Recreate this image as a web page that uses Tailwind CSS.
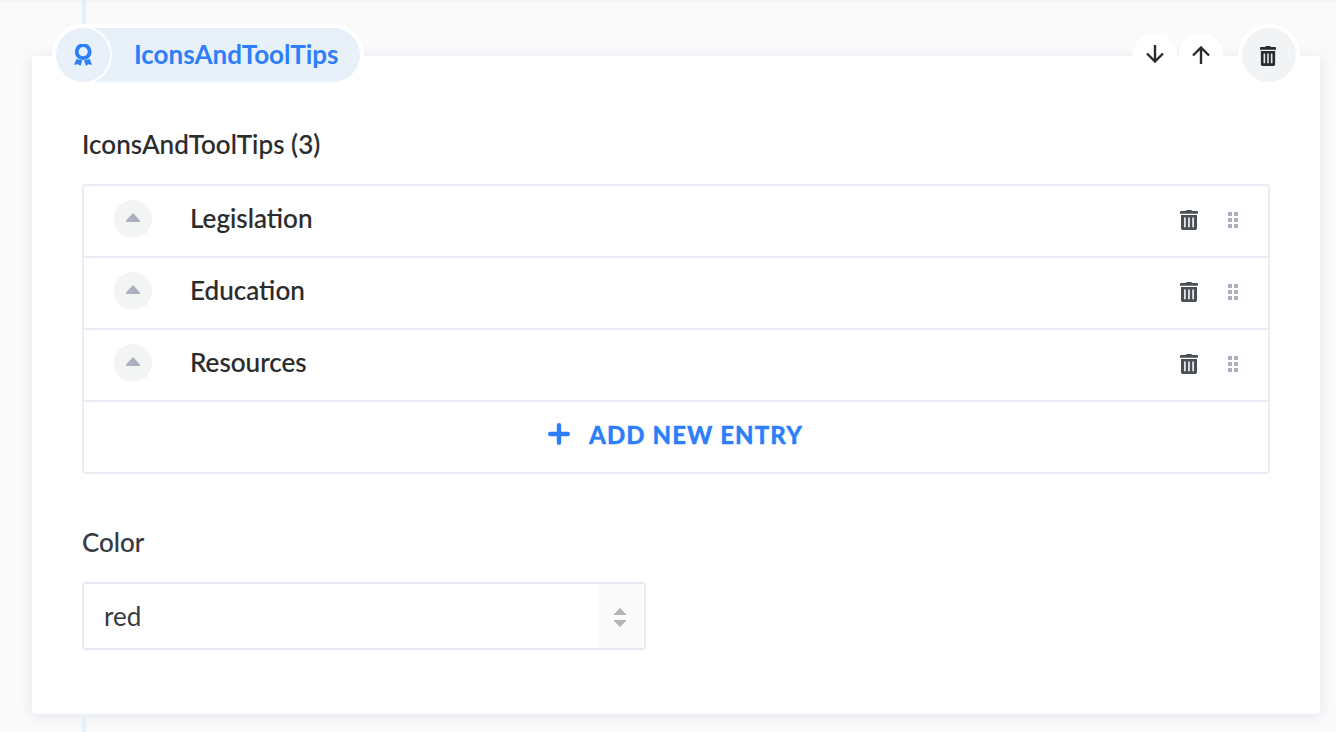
<!DOCTYPE html>
<html lang="en">
<head>
<meta charset="utf-8">
<title>IconsAndToolTips</title>
<script src="https://cdn.jsdelivr.net/npm/@tailwindcss/browser@4"></script>
</head>
<body class="h-[732px] overflow-hidden bg-[#fafafa] font-['Lato',sans-serif] text-[26px] leading-8 font-medium text-[#292b2c]">
<svg class="hidden">
  <symbol id="trash" viewBox="0 0 18 20" preserveAspectRatio="none">
    <path fill="currentColor" d="M6 1Q6 0 7 0h4Q12 0 12 1h5q1 0 1 1v1.700H0V2q0-1 1-1zM1 5h16v13.200q0 1.800-1.800 1.800H2.800Q1 20 1 18.200z"/>
    <path fill="#e4e6e8" d="M4 7.500v9.800h1.800V7.500zM8.100 7.500v9.800h1.800V7.500zM12.200 7.500v9.800H14V7.500z"/>
  </symbol>
  <symbol id="grip" viewBox="0 0 10 16">
    <path fill="currentColor" d="M0 0h4v4H0zM6 0h4v4H6zM0 6h4v4H0zM6 6h4v4H6zM0 12h4v4H0zM6 12h4v4H6z"/>
  </symbol>
</svg>
<div class="flex h-7 pl-[82px] shadow-[inset_0_2px_3px_-1px_#eef1f8]"><div class="w-1 bg-[#e6f0fa]"></div></div>
<main class="mt-7 mr-4 ml-8 h-[658px] rounded bg-white shadow-[0_2px_14px_rgba(104,128,190,0.16)]">
  <header class="relative -top-7 flex h-[54px] items-center pr-6 pl-6">
    <div class="flex h-[54px] w-[304px] items-center rounded-full bg-[#e8f0fa] ring-4 ring-white">
      <div class="flex size-[54px] shrink-0 items-center justify-center rounded-full bg-[#e8f0fa] ring-2 ring-white">
        <svg class="h-[22px] w-[18px]" viewBox="0 0 18 22" fill="none">
          <circle cx="9.200" cy="7.700" r="6.500" stroke="#2d7ff9" stroke-width="3.800"/>
          <path fill="#2d7ff9" d="M2.400 15 8.400 16.500 6.400 22 4.300 20.300 0 20.800zM15.800 15 9.900 16.500l2.200 5.500 2-1.700 3.900.5z"/>
        </svg>
      </div>
      <span class="mb-[2px] ml-6 font-bold text-[#2d7ff9]">IconsAndToolTips</span>
    </div>
    <div class="mr-[19px] ml-auto flex gap-[2px]">
      <div class="flex size-11 items-center justify-center rounded-full bg-white">
        <svg class="mb-[3px] size-[18px]" viewBox="0 0 18 18" fill="none" stroke="#292b2c" stroke-width="2.400"><path d="M9 0v17M1 8.500l8 8 8-8"/></svg>
      </div>
      <div class="flex size-11 items-center justify-center rounded-full bg-white">
        <svg class="size-[18px]" viewBox="0 0 18 18" fill="none" stroke="#292b2c" stroke-width="2.400"><path d="M9 18V1M1 9.500l8-8 8 8"/></svg>
      </div>
    </div>
    <div class="flex size-[54px] items-center justify-center rounded-full bg-[#f1f3f5] ring-4 ring-white">
      <svg class="mt-[2px] ml-[-2px] h-5 w-4 text-[#292b2c]"><use href="#trash"/></svg>
    </div>
  </header>
  <section class="mr-[50px] ml-[50px] pt-[18px]">
    <h2 class="tracking-[0.05px] [-webkit-text-stroke:0.15px]">IconsAndToolTips (3)</h2>
    <div class="mt-6 h-[290px] rounded border-2 border-[#e9edf4]">
      <div class="flex h-[72px] items-center border-b-2 border-[#e9edf4] pr-[30px] pl-[30px]">
        <div class="mb-1 flex size-[38px] items-center justify-center rounded-full bg-[#f3f5f5]"><svg class="mb-[3px] h-[9px] w-[14px]" viewBox="0 0 14 9"><path fill="#aab2c0" d="M7 0l7 7.500V9H0V7.500z"/></svg></div>
        <span class="mb-[6px] ml-[38px] text-[26.100px] [-webkit-text-stroke:0.15px]">Legislation</span>
        <svg class="mr-[30px] mb-[2px] ml-auto h-5 w-[18px] text-[#4a4f57]"><use href="#trash"/></svg>
        <svg class="mb-[2px] h-4 w-[10px] text-[#aab2c0]"><use href="#grip"/></svg>
      </div>
      <div class="flex h-[72px] items-center border-b-2 border-[#e9edf4] pr-[30px] pl-[30px]">
        <div class="mb-1 flex size-[38px] items-center justify-center rounded-full bg-[#f3f5f5]"><svg class="mb-[3px] h-[9px] w-[14px]" viewBox="0 0 14 9"><path fill="#aab2c0" d="M7 0l7 7.500V9H0V7.500z"/></svg></div>
        <span class="mb-[6px] ml-[38px] text-[26.100px] [-webkit-text-stroke:0.15px]">Education</span>
        <svg class="mr-[30px] mb-[2px] ml-auto h-5 w-[18px] text-[#4a4f57]"><use href="#trash"/></svg>
        <svg class="mb-[2px] h-4 w-[10px] text-[#aab2c0]"><use href="#grip"/></svg>
      </div>
      <div class="flex h-[72px] items-center border-b-2 border-[#e9edf4] pr-[30px] pl-[30px]">
        <div class="mb-1 flex size-[38px] items-center justify-center rounded-full bg-[#f3f5f5]"><svg class="mb-[3px] h-[9px] w-[14px]" viewBox="0 0 14 9"><path fill="#aab2c0" d="M7 0l7 7.500V9H0V7.500z"/></svg></div>
        <span class="mb-[6px] ml-[38px] text-[26.100px] [-webkit-text-stroke:0.15px]">Resources</span>
        <svg class="mr-[30px] mb-[2px] ml-auto h-5 w-[18px] text-[#4a4f57]"><use href="#trash"/></svg>
        <svg class="mb-[2px] h-4 w-[10px] text-[#aab2c0]"><use href="#grip"/></svg>
      </div>
      <div class="flex h-[66px] items-center pl-[464px] text-2xl font-black tracking-[1.1px] text-[#2d7ff9]">
        <svg class="mr-[19px] mb-[3px] size-[22px]" viewBox="0 0 22 22" fill="none" stroke="currentColor" stroke-width="4.400" stroke-linecap="round"><path d="M11 2.200v17.600M2.200 11h17.600"/></svg>
        <span class="[-webkit-text-stroke:0.3px]">ADD NEW ENTRY</span>
      </div>
    </div>
    <h2 class="mt-[52px] text-[#373b44] [-webkit-text-stroke:0.1px]">Color</h2>
    <div class="mt-[24px] flex h-[68px] w-[564px] items-center rounded border-2 border-[#e4e9f4] pr-[2px] pl-5 font-normal text-[#373b44]">
      <span>red</span>
      <div class="ml-auto flex h-16 w-11 items-center justify-center bg-[#fafafa]">
        <svg class="mt-[4px] h-5 w-3" viewBox="0 0 12 20"><path fill="#b3b5b9" d="M6 0l6 6v1H0V6zM0 12h12v1l-6 6-6-6z"/></svg>
      </div>
    </div>
  </section>
</main>
<div class="mt-1 ml-[82px] h-[14px] w-1 bg-[#e6f0fa]"></div>
</body>
</html>
